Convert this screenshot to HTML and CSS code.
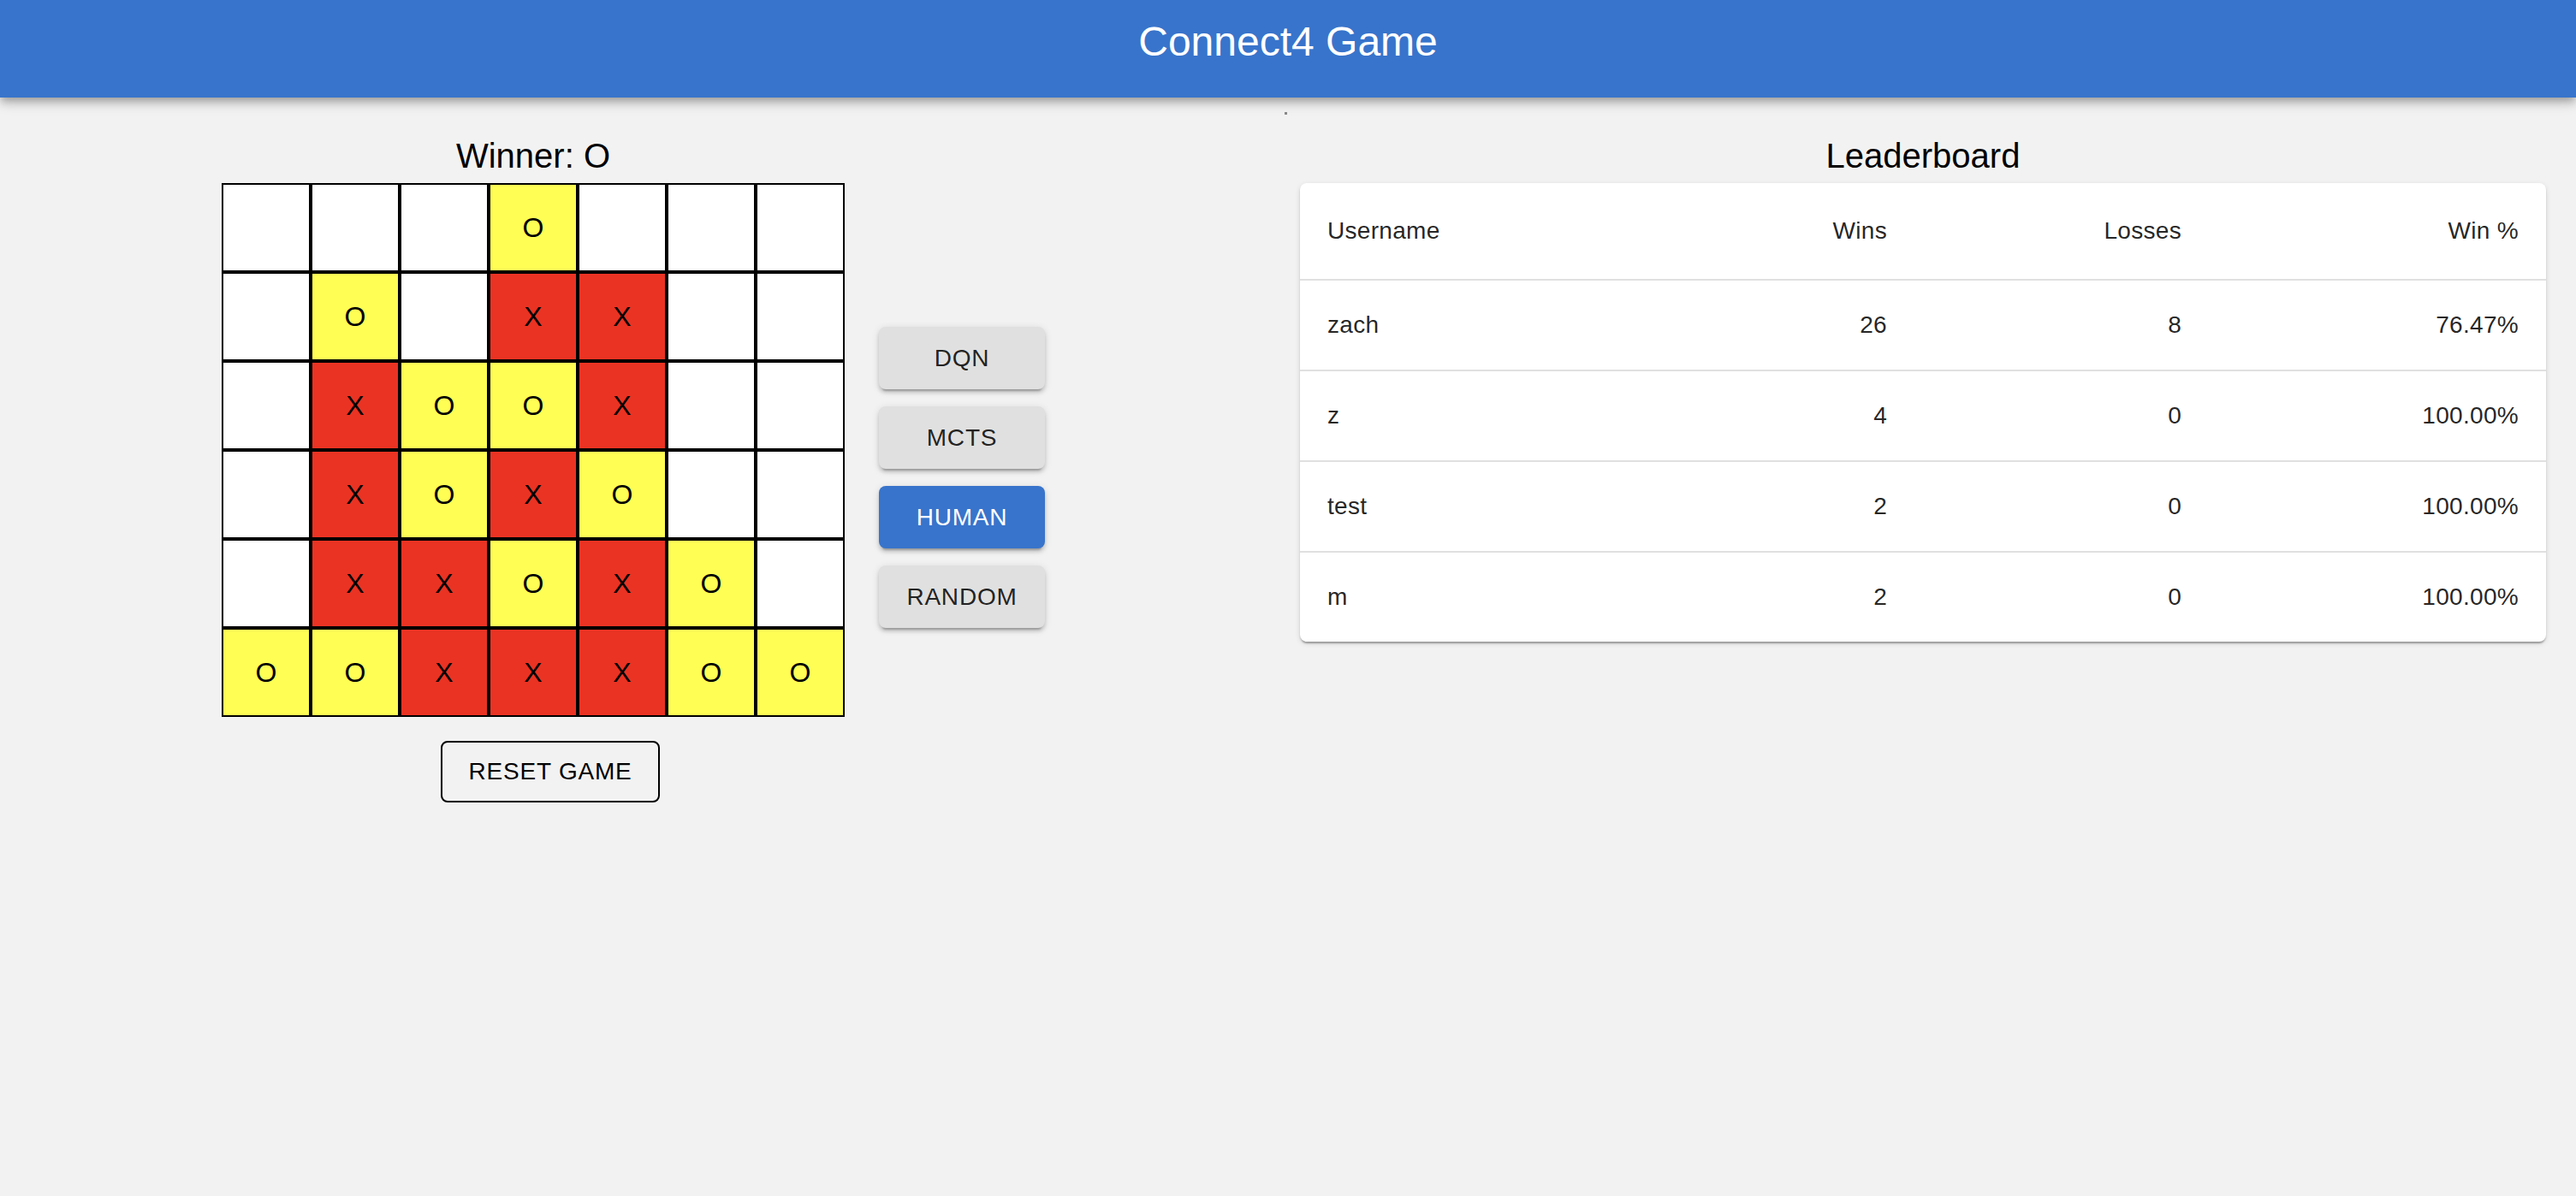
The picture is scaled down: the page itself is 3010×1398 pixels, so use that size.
FILE: index.html
```html
<!DOCTYPE html>
<html lang="en">
<head>
<meta charset="utf-8">
<title>Connect4 Game</title>
<link rel="stylesheet" href="styles.css">
</head>
<body>
<header class="appbar">Connect4 Game</header>
<div class="topgap"><span class="speck"></span></div>
<main class="main">
  <section class="play">
    <div class="left">
      <div class="game">
        <h2 class="title">Winner: O</h2>
        <div class="board">
          <div class="cell"></div><div class="cell"></div><div class="cell"></div><div class="cell o">O</div><div class="cell"></div><div class="cell"></div><div class="cell"></div>
          <div class="cell"></div><div class="cell o">O</div><div class="cell"></div><div class="cell x">X</div><div class="cell x">X</div><div class="cell"></div><div class="cell"></div>
          <div class="cell"></div><div class="cell x">X</div><div class="cell o">O</div><div class="cell o">O</div><div class="cell x">X</div><div class="cell"></div><div class="cell"></div>
          <div class="cell"></div><div class="cell x">X</div><div class="cell o">O</div><div class="cell x">X</div><div class="cell o">O</div><div class="cell"></div><div class="cell"></div>
          <div class="cell"></div><div class="cell x">X</div><div class="cell x">X</div><div class="cell o">O</div><div class="cell x">X</div><div class="cell o">O</div><div class="cell"></div>
          <div class="cell o">O</div><div class="cell o">O</div><div class="cell x">X</div><div class="cell x">X</div><div class="cell x">X</div><div class="cell o">O</div><div class="cell o">O</div>
        </div>
      </div>
      <button class="reset">RESET GAME</button>
    </div>
    <div class="modes">
      <button class="mode">DQN</button>
      <button class="mode">MCTS</button>
      <button class="mode active">HUMAN</button>
      <button class="mode">RANDOM</button>
    </div>
  </section>
  <section class="board-side">
    <h2 class="title">Leaderboard</h2>
    <div class="card">
      <table class="table">
        <thead>
          <tr><th class="c1">Username</th><th class="c2 num">Wins</th><th class="c3 num">Losses</th><th class="c4 num">Win %</th></tr>
        </thead>
        <tbody>
          <tr><td>zach</td><td class="num">26</td><td class="num">8</td><td class="num">76.47%</td></tr>
          <tr><td>z</td><td class="num">4</td><td class="num">0</td><td class="num">100.00%</td></tr>
          <tr><td>test</td><td class="num">2</td><td class="num">0</td><td class="num">100.00%</td></tr>
          <tr class="last"><td>m</td><td class="num">2</td><td class="num">0</td><td class="num">100.00%</td></tr>
        </tbody>
      </table>
    </div>
  </section>
</main>
</body>
</html>
```

FILE: styles.css
```css
html, body {
  margin: 0;
  padding: 0;
}

body {
  background: #f2f2f2;
  font-family: "Liberation Sans", Arial, Helvetica, sans-serif;
  color: #000;
  min-height: 1398px;
}

.appbar {
  display: block;
  height: 114px;
  box-sizing: border-box;
  padding-top: 21px;
  background: #3874cb;
  color: #fff;
  font-size: 48px;
  line-height: 56px;
  text-align: center;
  box-shadow: 0 4px 8px -2px rgba(0, 0, 0, 0.2), 0 8px 10px 0 rgba(0, 0, 0, 0.14), 0 2px 20px 0 rgba(0, 0, 0, 0.12);
  position: relative;
  z-index: 2;
}

.topgap {
  height: 45px;
  display: flex;
  justify-content: center;
}

.speck {
  display: block;
  width: 3px;
  height: 3px;
  margin-top: 17px;
  margin-left: -6px;
  background: #8a8a8a;
}

.main {
  display: flex;
  align-items: flex-start;
  padding: 0 35px 0 259px;
}

.play {
  display: flex;
  align-items: flex-start;
}

.left {
  display: flex;
  flex-direction: column;
  align-items: center;
  width: 768px;
}

.game {
  width: 728px;
  margin-right: 40px;
}

.title {
  margin: 0 0 9px 0;
  font-size: 40px;
  line-height: 46px;
  font-weight: 400;
  text-align: center;
  color: #000;
}

.board {
  display: grid;
  grid-template-columns: repeat(7, 104px);
  grid-auto-rows: 104px;
}

.cell {
  box-sizing: border-box;
  border: 2px solid #000;
  background: #fff;
  display: flex;
  align-items: center;
  justify-content: center;
  font-size: 32px;
  color: #000;
}

.cell.x {
  background: #ea3323;
}

.cell.o {
  background: #fffe55;
}

.reset {
  margin-top: 28px;
  height: 72px;
  padding: 0 30px;
  box-sizing: border-box;
  border: 2px solid #000;
  border-radius: 8px;
  background: transparent;
  font-family: "Liberation Sans", Arial, Helvetica, sans-serif;
  font-size: 28px;
  letter-spacing: 0.8px;
  color: #000;
}

.modes {
  display: flex;
  flex-direction: column;
  gap: 20px;
  width: 194px;
  margin-top: 223px;
}

.mode {
  height: 73px;
  padding: 0 32px;
  border: 0;
  border-radius: 8px;
  background: #e0e0e0;
  color: rgba(0, 0, 0, 0.87);
  font-family: "Liberation Sans", Arial, Helvetica, sans-serif;
  font-size: 28px;
  letter-spacing: 0.8px;
  box-shadow: 0 6px 2px -4px rgba(0, 0, 0, 0.2), 0 4px 4px 0 rgba(0, 0, 0, 0.14), 0 2px 10px 0 rgba(0, 0, 0, 0.12);
}

.mode.active {
  background: #3874cb;
  color: #fff;
}

.board-side {
  flex: 0 0 1456px;
  margin-left: auto;
}

.card {
  background: #fff;
  border-radius: 8px;
  overflow: hidden;
  box-shadow: 0 4px 2px -2px rgba(0, 0, 0, 0.2), 0 2px 2px 0 rgba(0, 0, 0, 0.14), 0 2px 6px 0 rgba(0, 0, 0, 0.12);
}

.table {
  width: 100%;
  border-collapse: collapse;
  table-layout: fixed;
  font-size: 28px;
  letter-spacing: 0.3px;
  color: rgba(0, 0, 0, 0.87);
}

.table th,
.table td {
  box-sizing: border-box;
  padding: 32px;
  border-bottom: 2px solid #e0e0e0;
  text-align: left;
  font-weight: 400;
  line-height: 40px;
}

.table th {
  line-height: 48px;
}

.table .c1 { width: 434px; }
.table .c2 { width: 284px; }
.table .c3 { width: 344px; }

.table .num {
  text-align: right;
}

.table tr.last td {
  border-bottom: 0;
}
```
